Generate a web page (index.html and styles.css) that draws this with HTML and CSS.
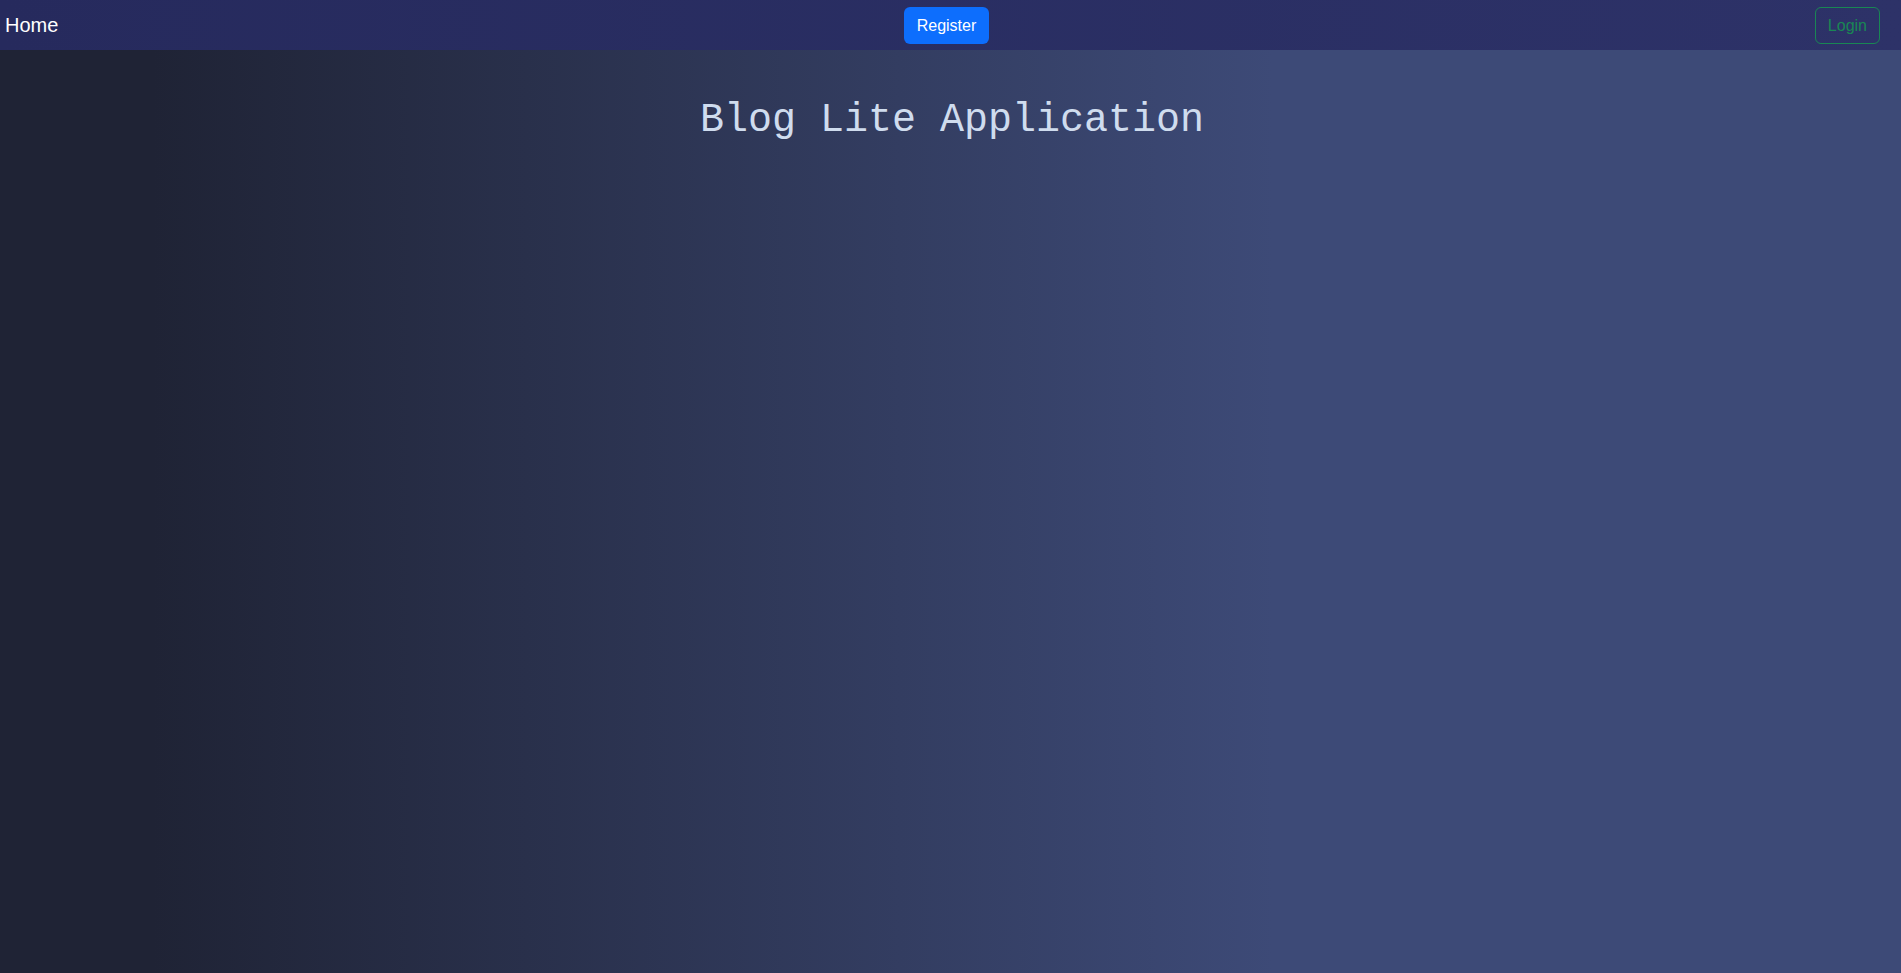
FILE: index.html
```html
<!DOCTYPE html>
<html lang="en">
<head>
<meta charset="utf-8">
<title>Blog Lite</title>
<link rel="stylesheet" href="styles.css">
</head>
<body>
<nav class="navbar">
  <a class="brand" href="#">Home</a>
  <a class="btn btn-primary" href="#">Register</a>
  <a class="btn btn-outline" href="#">Login</a>
</nav>
<main class="content">
  <h1 class="title">Blog Lite Application</h1>
</main>
</body>
</html>
```
FILE: styles.css
```css
* { box-sizing: border-box; }
html, body { height: 100%; }
body {
  margin: 0;
  font-family: "Liberation Sans", Arial, sans-serif;
  background: linear-gradient(90deg, #1f2335 8%, #3d4a77 67%);
  color: #fff;
}
.navbar {
  height: 50px;
  display: grid;
  grid-template-columns: 1fr auto 1fr;
  align-items: center;
  padding: 0 21px 0 5px;
  background: linear-gradient(90deg, #262a5d, #2d3268);
}
.brand {
  color: #fff;
  text-decoration: none;
  font-size: 20px;
  justify-self: start;
}
.btn {
  display: inline-block;
  height: 37px;
  line-height: 35px;
  padding: 0 12px;
  border: 1px solid transparent;
  border-radius: 6px;
  font-size: 16px;
  text-decoration: none;
}
.btn-primary {
  background: #0d6efd;
  color: #fff;
  justify-self: center;
  margin-left: 8px;
}
.btn-outline {
  border-color: #198754;
  color: #198754;
  justify-self: end;
}
.content {
  display: flex;
  justify-content: center;
  padding-left: 3px;
}
.title {
  margin: 48px 0 0;
  font-family: "Liberation Mono", "Courier New", monospace;
  font-weight: normal;
  font-size: 40px;
  color: #cfdcee;
}
```
